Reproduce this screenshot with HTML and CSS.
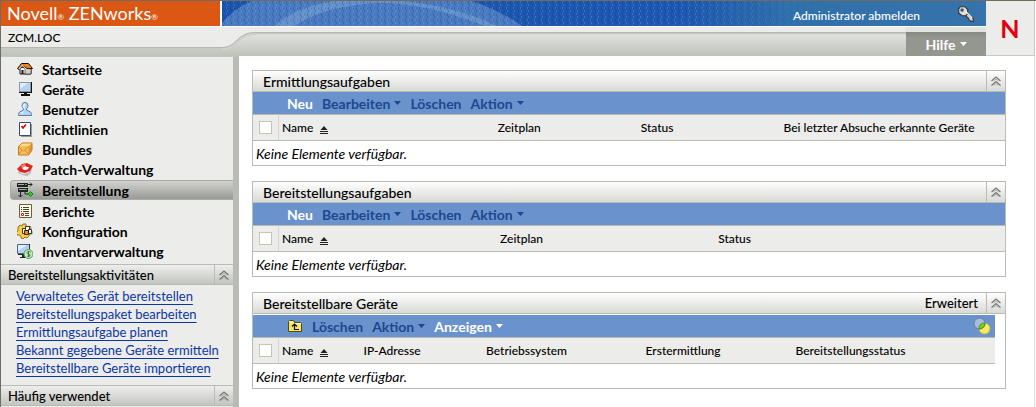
FILE: index.html
```html
<!DOCTYPE html>
<html lang="de">
<head>
    <meta charset="UTF-8">
    <meta name="viewport" content="width=device-width, initial-scale=1.0">
    <title>Novell ZENworks</title>
    <link rel="stylesheet" href="styles.css">
</head>
<body>
    <svg class="defs" aria-hidden="true">
        <symbol id="collapse" viewBox="0 0 12 12">
            <path d="M1.500 6 6 2l4.500 4M1.500 10.500 6 6.500l4.500 4" fill="none" stroke="#777" stroke-width="1.200"/>
            <path d="M3.500 6 6 4l2.500 2M3.500 10.500 6 8.500l2.500 2" fill="none" stroke="#999" stroke-width=".8"/>
        </symbol>
        <symbol id="caret" viewBox="0 0 7 4">
            <path d="M0 0h7L3.500 4z" fill="currentColor"/>
        </symbol>
        <symbol id="sort" viewBox="0 0 8 8">
            <path d="M4 0 7.500 4h-7zM0 5h8v1H0zM0 7h8v1H0z" fill="#222"/>
        </symbol>
    </svg>

    <header class="header">
        <div class="brand">Novell<sub>®</sub> ZENworks<sub>®</sub></div>
        <div class="banner">
            <svg class="banner-art" preserveAspectRatio="none" viewBox="0 0 764 25" aria-hidden="true">
                <defs>
                    <linearGradient id="blue">
                        <stop offset="0" stop-color="#1c55ab"/>
                        <stop offset=".6" stop-color="#1f58b0"/>
                        <stop offset=".74" stop-color="#3070ab"/>
                        <stop offset="1" stop-color="#3673ab"/>
                    </linearGradient>
                    <linearGradient id="fade">
                        <stop offset=".6" stop-color="#fff"/>
                        <stop offset=".8" stop-color="#000"/>
                    </linearGradient>
                    <pattern id="weave" width="7" height="6" patternUnits="userSpaceOnUse">
                        <path d="M1 0h1v3H1zM2 3h1v2H2zM5 1h1v1H5z" fill="#062f80" opacity=".25"/>
                        <path d="M4 0h1v2H4zM5 3h1v2H5z" fill="#7fb0ee" opacity=".3"/>
                    </pattern>
                    <mask id="weave-mask"><rect width="764" height="25" fill="url(#fade)"/></mask>
                </defs>
                <rect width="764" height="25" fill="url(#blue)"/>
                <path d="M0 22Q12 8 29 0H250Q277 9 300 25H0z" fill="#4a7bc0"/>
                <path d="M53 25Q70 7 112 0H182Q236 6 275 25h-12Q205 2 158 2 104 4 72 25z" fill="#8fb4da" opacity=".4"/>
                <rect width="764" height="25" fill="url(#weave)" mask="url(#weave-mask)"/>
            </svg>
            <a class="logout" href="#">Administrator abmelden</a>
            <svg class="key" viewBox="0 0 16 16" aria-hidden="true">
                <path d="m8.500 7 6 5v2.500h-2l-1.500-1-1-2-1.500-1L7 9z" fill="#d5d5d0" stroke="#333" stroke-width="1"/>
                <path d="M3 1.500h4L9.500 4v3.500L8 9.500H4.500L1.500 7V3.500z" fill="#dededa" stroke="#333" stroke-width="1"/>
                <path d="M3.500 3.500h2v2h-2z" fill="#335f9a" stroke="#444" stroke-width=".6"/>
                <path d="m8 6 5.500 5.500" stroke="#fff" stroke-width="1"/>
            </svg>
        </div>
        <div class="subbar">
            <div class="location">ZCM.LOC</div>
            <svg class="swoosh" viewBox="0 0 34 24" aria-hidden="true">
                <path d="M0 0H34V6C14 6 16 21 0 21z" fill="#ececea"/>
                <path d="M0 21.500C16 21.500 14 6.500 34 6.500" fill="none" stroke="#d0d1ce" stroke-width="3"/>
                <path d="M0 20.500C16 20.500 14 5.500 34 5.500" fill="none" stroke="#b6b8b3" stroke-width="1"/>
            </svg>
            <div class="strip"></div>
            <button class="help">Hilfe <svg class="caret"><use href="#caret"/></svg></button>
        </div>
        <div class="logo">N</div>
    </header>

    <div class="page">
        <aside class="sidebar">
            <nav class="nav">
                <a href="#"><svg viewBox="0 0 16 16"><path d="M3 6v7h11V8z" fill="#fff" stroke="#111"/><path d="M8 7v6h6V8l-2-2z" fill="#d8cdbd" stroke="#222" stroke-width=".6"/><path d="m.5 7.500 4-5h7l4 5H10l-4-3-4 4z" fill="#f0861c" stroke="#111"/><path d="m2 8 3.500-4L9 8" fill="none" stroke="#fff" stroke-width=".8"/><path d="M4.500 9h2v4h-2z" fill="#111"/></svg>Startseite</a>
                <a href="#"><svg viewBox="0 0 16 16"><path d="M2 1h12v10H2z" fill="#8b98a6"/><path d="M3 2h10v8H3z" fill="#b5d3ee"/><path d="M3 2h8L3 8z" fill="#dfedf9"/><path d="M13 1h1v10H2v1h13V1zM7 12h3v1h3v2H4v-2h3z" fill="#111"/></svg>Geräte</a>
                <a href="#"><svg viewBox="0 0 16 16"><path d="M5.500 2.500Q8 0 10.500 2.500 12 5 9.500 8v1l4 2q1 1 1 3.500h-13q0-2.500 1-3.500l4-2V8Q4 5 5.500 2.500z" fill="#b5d2ee" stroke="#5583b1"/><path d="M6 4q1-2 3-1-2 1-1 5-3-1-2-4zM3 12l4-2-1 3z" fill="#eaf4fd"/></svg>Benutzer</a>
                <a href="#"><svg viewBox="0 0 16 16"><path d="M14 3h1v13H4v-1h10z" fill="#999"/><path d="M2.500 1.500h11v13h-11z" fill="#fff" stroke="#394c70"/><path d="m4.500 5 1.500 2L9 3.500" fill="none" stroke="#d40000" stroke-width="1.600"/></svg>Richtlinien</a>
                <a href="#"><svg viewBox="0 0 16 16"><path d="M1.500 5.500 5 2h10v7l-3.500 5h-10z" fill="#e49b31" stroke="#c4761b"/><path d="M2 5.500 5 2.500h9.500l-3 3z" fill="#ffdb8a"/><path d="M2 6h9.500v7.500H2z" fill="#f7bc58"/><path d="m2 6 4.500 4L11 6M2 13l3-4M11 13 8 9" fill="none" stroke="#c98a35" stroke-width=".8"/></svg>Bundles</a>
                <a href="#"><svg viewBox="0 0 16 16"><path d="m1 10 4 3 6-1 4-5-1 5-4 3-5-1-4-2z" fill="#bbb"/><path d="m0 8 5-5 5-1 6 3-3 5-5 2-5-1z" fill="#df251e"/><path d="m4 5 3-2 2 1-4 3z" fill="#f78b7e"/><path d="m5 7 2-1 1-1 2 1 2 0-1 2-2 1H7z" fill="#fff"/></svg>Patch-Verwaltung</a>
                <a class="active" href="#"><svg viewBox="0 0 16 16"><path d="M0 1h11v4H0zM1 6h10v4H1z" fill="#222"/><path d="M1 2h6v1H1zM2 7h6v1H2z" fill="#aaa"/><path d="M8 2h2v1H8zM8 7h2v1H8z" fill="#3c3"/><path d="M11 2.500h4M13 .5l2 2-2 2M3.500 10v5M1.500 13l2 2 2-2M8 10v2h3" fill="none" stroke="#222"/><path d="m13.500 9.500 2.500 2.500-2.500 2.500L11 12z" fill="#29cf29" stroke="#126812" stroke-width=".8"/></svg>Bereitstellung</a>
                <a href="#"><svg viewBox="0 0 16 16"><path d="M2.500 1.500h12v13h-12z" fill="#fffbdc" stroke="#67614b"/><path d="M4 4.500h1M4 6.500h1M4 8.500h1M6 4.500h6M6 6.500h6M6 8.500h6M8 10.500h4M8 12.500h4" stroke="#444"/><path d="M4.500 10.500h2v2h-2z" fill="#fff" stroke="#d32b23"/></svg>Berichte</a>
                <a href="#"><svg viewBox="0 0 16 16"><path d="M6 1h3v2l2 1 2-1 1 2-1 2 2 1v3h-2l-1 2-2 2-2-1-2 2-2-1v-2l-2-1-2 0-1-3 2-1V6L1 4l2-2 2 1z" fill="#f8cc4c" stroke="#7d5810" stroke-width=".8"/><path d="M5.500 5.500h4v5h-4z" fill="#fff8d8" stroke="#111" stroke-width=".8"/><path d="M8.500 3.500h4v4h-4z" fill="#fff" stroke="#111" stroke-width=".8"/><path d="M11.500 6.500h3v4h-3z" fill="#fff" stroke="#111" stroke-width=".8"/><path d="M7.500 7.500h4v4h-4z" fill="#f18922" stroke="#111" stroke-width=".8"/></svg>Konfiguration</a>
                <a href="#"><svg viewBox="0 0 16 16"><path d="M.5 1.500h12v9H.5z" fill="#afd1ef" stroke="#4a6986"/><path d="M1 2h9L1 8z" fill="#e1effa"/><path d="M12 1h1v10H1v1h12zM5 12h3v2h1v1H3v-1h2z" fill="#222"/><circle cx="11.500" cy="11" r="4.500" fill="#c8e8b8" stroke="#4f975e"/><path d="M13.500 9q-3-1.500-3.500.5 0 1 1.500 1.500 2 .5 1.500 2-1 1-3 0M11.500 8v6" fill="none" stroke="#247a35" stroke-width=".9"/></svg>Inventarverwaltung</a>
            </nav>
            <section>
                <div class="side-head">
                    <h2>Bereitstellungsaktivitäten</h2>
                    <button class="collapse" aria-label="Einklappen"><svg><use href="#collapse"/></svg></button>
                </div>
                <ul class="tasks">
                    <li><a href="#">Verwaltetes Gerät bereitstellen</a></li>
                    <li><a href="#">Bereitstellungspaket bearbeiten</a></li>
                    <li><a href="#">Ermittlungsaufgabe planen</a></li>
                    <li><a href="#">Bekannt gegebene Geräte ermitteln</a></li>
                    <li><a href="#">Bereitstellbare Geräte importieren</a></li>
                </ul>
            </section>
            <section>
                <div class="side-head">
                    <h2>Häufig verwendet</h2>
                    <button class="collapse" aria-label="Einklappen"><svg><use href="#collapse"/></svg></button>
                </div>
            </section>
        </aside>

        <main class="content">
            <section class="panel">
                <div class="panel-head">
                    <h2>Ermittlungsaufgaben</h2>
                    <button class="collapse" aria-label="Einklappen"><svg><use href="#collapse"/></svg></button>
                </div>
                <div class="toolbar">
                    <button class="on">Neu</button>
                    <button>Bearbeiten <svg class="caret"><use href="#caret"/></svg></button>
                    <button>Löschen</button>
                    <button>Aktion <svg class="caret"><use href="#caret"/></svg></button>
                </div>
                <table class="discovery">
                    <thead>
                        <tr>
                            <th class="check"><input type="checkbox" aria-label="Alle auswählen"></th>
                            <th class="name">Name <svg class="sort"><use href="#sort"/></svg></th>
                            <th class="plan">Zeitplan</th>
                            <th class="status">Status</th>
                            <th>Bei letzter Absuche erkannte Geräte</th>
                        </tr>
                    </thead>
                    <tbody>
                        <tr><td colspan="5">Keine Elemente verfügbar.</td></tr>
                    </tbody>
                </table>
            </section>

            <section class="panel">
                <div class="panel-head">
                    <h2>Bereitstellungsaufgaben</h2>
                    <button class="collapse" aria-label="Einklappen"><svg><use href="#collapse"/></svg></button>
                </div>
                <div class="toolbar">
                    <button class="on">Neu</button>
                    <button>Bearbeiten <svg class="caret"><use href="#caret"/></svg></button>
                    <button>Löschen</button>
                    <button>Aktion <svg class="caret"><use href="#caret"/></svg></button>
                </div>
                <table class="deployment">
                    <thead>
                        <tr>
                            <th class="check"><input type="checkbox" aria-label="Alle auswählen"></th>
                            <th class="name">Name <svg class="sort"><use href="#sort"/></svg></th>
                            <th class="plan">Zeitplan</th>
                            <th>Status</th>
                        </tr>
                    </thead>
                    <tbody>
                        <tr><td colspan="4">Keine Elemente verfügbar.</td></tr>
                    </tbody>
                </table>
            </section>

            <section class="panel">
                <div class="panel-head">
                    <h2>Bereitstellbare Geräte</h2>
                    <a class="advanced" href="#">Erweitert</a>
                    <button class="collapse" aria-label="Einklappen"><svg><use href="#collapse"/></svg></button>
                </div>
                <div class="inset">
                    <div class="toolbar">
                        <button aria-label="Nach oben"><svg class="folder" viewBox="0 0 16 14"><path d="M1.500 12.500v-10l1-1h4l1 2h6l1 1v8z" fill="#f8e566" stroke="#514b14"/><path d="M2 3h4l1 1.500h7" fill="none" stroke="#fffbd0"/><path d="M7.500 10.500V6M5 7.500 7.500 5 10 7.500M7 10.500h5" fill="none" stroke="#111" stroke-width="1.200"/></svg></button>
                        <button>Löschen</button>
                        <button>Aktion <svg class="caret"><use href="#caret"/></svg></button>
                        <button class="on">Anzeigen <svg class="caret"><use href="#caret"/></svg></button>
                        <svg class="filter" viewBox="0 0 18 18" aria-hidden="true">
                            <circle cx="11.500" cy="11.500" r="5.500" fill="#f9e95c" stroke="#c7a83a" stroke-width=".8"/>
                            <circle cx="6.500" cy="6.500" r="5.500" fill="#c5cfdd" fill-opacity=".7" stroke="#606d9d" stroke-width=".8"/>
                            <path d="M6 11.800Q6 6 11.800 6 12.500 11.500 6 11.800z" fill="#79cf20" stroke="#398b1c" stroke-width=".8"/>
                        </svg>
                    </div>
                    <table class="devices">
                        <thead>
                            <tr>
                                <th class="check"><input type="checkbox" aria-label="Alle auswählen"></th>
                                <th class="name">Name <svg class="sort"><use href="#sort"/></svg></th>
                                <th class="ip">IP-Adresse</th>
                                <th class="os">Betriebssystem</th>
                                <th class="first">Erstermittlung</th>
                                <th>Bereitstellungsstatus</th>
                            </tr>
                        </thead>
                        <tbody>
                            <tr><td colspan="6">Keine Elemente verfügbar.</td></tr>
                        </tbody>
                    </table>
                </div>
            </section>
        </main>
    </div>
</body>
</html>
```

FILE: styles.css
```css
* {
    box-sizing: border-box;
}
body {
    margin: 0;
    min-height: 100vh;
    display: flex;
    flex-direction: column;
    border: 1px solid #716c62;
    border-width: 1px 0 0 1px;
    background: #fff;
    color: #000;
    font-family: "Trebuchet MS", Lato, "Open Sans", sans-serif;
    font-size: 13px;
}
.defs {
    display: none;
}
svg {
    flex: none;
}
h2 {
    margin: 0;
    font-size: 13px;
    font-weight: 500;
}
a {
    color: inherit;
    text-decoration: none;
}
button {
    display: flex;
    align-items: center;
    gap: 4px;
    margin: 0;
    padding: 0;
    border: 0;
    background: none;
    color: inherit;
    font: inherit;
    cursor: pointer;
}
.caret {
    width: 7px;
    height: 4px;
}

/* header */
.header {
    display: grid;
    grid-template-columns: 219px 1fr 50px;
    grid-template-rows: 25px 29px;
    row-gap: 1px;
}
.brand {
    padding-left: 6px;
    background: #da5814;
    color: #fff;
    font-size: 18px;
    line-height: 24px;
}
.brand sub {
    font-size: 8px;
    line-height: 0;
    vertical-align: baseline;
}
.banner {
    position: relative;
    display: flex;
    align-items: center;
    justify-content: flex-end;
    gap: 37px;
    margin-left: 2px;
    padding-right: 11px;
    color: #fff;
}
.banner-art {
    position: absolute;
    inset: 0;
    width: 100%;
    height: 100%;
}
.logout {
    position: relative;
    padding-top: 3px;
    font-size: 12px;
    font-weight: 500;
}
.key {
    position: relative;
    width: 18px;
    height: 18px;
}
.subbar {
    grid-column: 1 / 3;
    display: flex;
    align-items: flex-start;
    background: linear-gradient(#e2e4e0 6px, #bfc1bb);
}
.location {
    width: 221px;
    height: 21px;
    padding-left: 7px;
    border-bottom: 1px solid #b6b8b3;
    background: #ececea;
    box-shadow: 0 1px 1px #c6c8c3;
    font-size: 12px;
    font-weight: 500;
    line-height: 21px;
}
.swoosh {
    width: 34px;
    height: 24px;
}
.strip {
    flex: 1;
    height: 6px;
    border-bottom: 1px solid #b6b8b3;
    background: #ececea;
    box-shadow: 0 1px 1px #c6c8c3;
}
.help {
    align-self: flex-end;
    justify-content: center;
    width: 80px;
    height: 24px;
    background: linear-gradient(#858781, #949690 6px);
    color: #fff;
    font-size: 14px;
    font-weight: 700;
}
.logo {
    grid-column: 3;
    grid-row: 1 / 3;
    display: flex;
    align-items: center;
    justify-content: center;
    margin-right: 1px;
    border: 1px solid #c9cac6;
    border-width: 0 1px 1px 0;
    background: #ececea;
    color: #e2000f;
    font-size: 25px;
    font-weight: 700;
    line-height: 1;
}

/* sidebar */
.page {
    flex: 1;
    display: flex;
    margin-right: 1px;
    border-right: 1px solid #ddd;
}
.sidebar {
    width: 238px;
    border-top: 1px solid #c3c4c0;
    border-right: 6px solid #b9bbb5;
    background: #ececeb;
}
.nav {
    padding: 2px 0 3px 9px;
}
.nav a {
    display: flex;
    align-items: center;
    gap: 9px;
    height: 20px;
    padding-left: 7px;
    font-size: 14px;
    font-weight: 700;
}
.nav svg {
    width: 16px;
    height: 16px;
}
.nav .active {
    margin: 1px 0;
    padding-left: 6px;
    border: 1px solid #a9aba6;
    border-right: 0;
    border-radius: 4px 0 0 4px;
    background: linear-gradient(#d2d3d0, #989a95);
}
.side-head {
    display: flex;
    align-items: center;
    height: 21px;
    padding-left: 7px;
    border: 1px solid #b9bbb5;
    border-width: 1px 0;
    background: linear-gradient(#eeeeed, #c3c5c0);
}
.side-head h2,
.panel-head h2 {
    flex: 1;
}
.collapse {
    align-self: stretch;
    justify-content: center;
    width: 19px;
    border-left: 1px solid #b9bbb5;
}
.collapse svg {
    width: 12px;
    height: 12px;
}
.tasks {
    margin: 0;
    padding: 2px 0 8px 15px;
    list-style: none;
    line-height: 18px;
    white-space: nowrap;
}
.tasks a {
    color: #0b37a4;
    text-decoration: underline;
    text-decoration-skip-ink: none;
    text-underline-offset: 3px;
}

/* panels */
.content {
    flex: 1;
    display: flex;
    flex-direction: column;
    gap: 15px;
    padding: 14px 28px 18px 13px;
}
.panel {
    border: 1px solid #b9bbb5;
}
.panel-head {
    display: flex;
    align-items: center;
    height: 21px;
    padding-left: 10px;
    border-bottom: 1px solid #b9bbb5;
    background: linear-gradient(#fff, #d8dad5);
}
.panel-head h2 {
    font-size: 14px;
}
.advanced {
    margin-right: 8px;
    font-weight: 500;
}
.toolbar {
    display: flex;
    align-items: center;
    gap: 9px;
    height: 22px;
    padding: 0 4px 0 34px;
    background: #6a93cd;
    color: #1d478f;
    font-size: 14px;
    font-weight: 700;
}
.toolbar .on {
    color: #fff;
}
.folder {
    width: 16px;
    height: 14px;
}
.filter {
    width: 18px;
    height: 18px;
    margin-left: auto;
}
.inset {
    margin: 1px 10px 0 0;
}
table {
    width: 100%;
    border-collapse: separate;
    border-spacing: 0;
    table-layout: fixed;
}
th {
    height: 27px;
    padding: 0 3px;
    border: 1px solid #b9bbb5;
    border-width: 1px 0;
    background: #ececea;
    font-size: 12px;
    font-weight: 500;
    text-align: left;
    white-space: nowrap;
}
td {
    height: 24px;
    padding: 0 3px;
    font-size: 14px;
    font-style: italic;
}
.check {
    width: 26px;
    padding: 0 6px;
    border-right: 1px solid #d3d4d0;
}
.check input {
    display: block;
    appearance: none;
    width: 13px;
    height: 13px;
    margin: 0;
    border: 1px solid #c5c5b4;
    background: #fff;
}
.sort {
    width: 8px;
    height: 8px;
    margin-left: 4px;
    vertical-align: -2px;
}
.discovery .name {
    width: 28.7%;
}
.discovery .plan,
.discovery .status {
    width: 19%;
}
.deployment .name,
.deployment .plan {
    width: 29%;
}
.devices .name {
    width: 11%;
}
.devices .ip {
    width: 16.5%;
}
.devices .os {
    width: 21.5%;
}
.devices .first {
    width: 20.2%;
}
```
